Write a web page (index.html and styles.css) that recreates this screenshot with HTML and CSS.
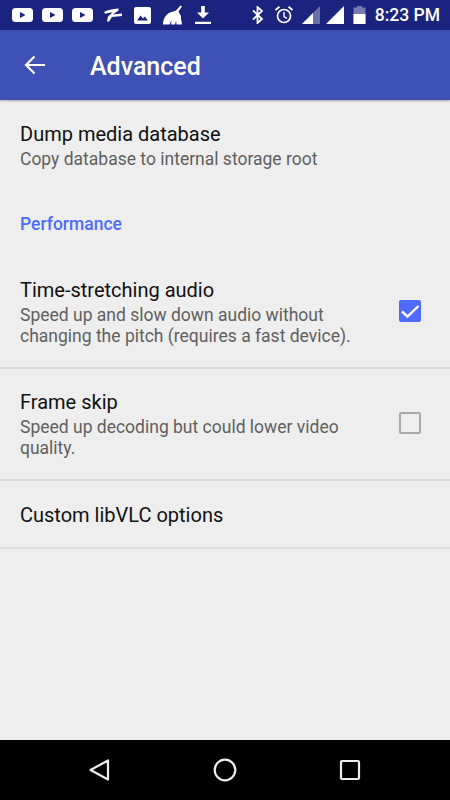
FILE: index.html
```html
<!DOCTYPE html>
<html lang="en">
<head>
<meta charset="utf-8">
<title>Advanced</title>
<link rel="stylesheet" href="styles.css">
</head>
<body>
<div class="phone">
  <header class="status">
    <div class="status-left">
      <svg class="yt" viewBox="0 0 21 14"><rect width="21" height="14" rx="3.5" fill="#fff"/><path d="M8 4l5.5 3L8 10z" fill="#1a237e"/></svg>
      <svg class="yt" viewBox="0 0 21 14"><rect width="21" height="14" rx="3.5" fill="#fff"/><path d="M8 4l5.5 3L8 10z" fill="#1a237e"/></svg>
      <svg class="yt" viewBox="0 0 21 14"><rect width="21" height="14" rx="3.5" fill="#fff"/><path d="M8 4l5.5 3L8 10z" fill="#1a237e"/></svg>
      <svg class="ic-z" viewBox="0 0 20 14"><path d="M1 4C4 2 9 1 15.500 .5V2.500L10 6.500 19 5.500V8L9 9 6 13.500H4L5 8.500 9.500 4.500C6.500 4.500 4 5 2.500 6z" fill="#fff"/></svg>
      <svg class="ic-pic" viewBox="0 0 17 17"><rect width="17" height="17" rx="2" fill="#fff"/><path d="M3 13.500l3.500-5 2.500 3 1.800-2 3.200 4z" fill="#1a237e"/></svg>
      <svg class="ic-broom" viewBox="0 0 20 20"><path d="M0 19.500C0 14 3 9 7 7.500C9 6.500 11.500 6.500 13 5.500L17.500 .5 19 1.500 15.500 6.500C16.500 8 17 10 18 11C17.500 14 19 17 19 19.500H13.500L13 16 12 19.500H8L8.500 15 6.500 19.500z" fill="#fff"/></svg>
      <svg class="ic-dl" viewBox="0 0 16 18"><path d="M6.200 0h3.600v6.500H14L8 12.500 2 6.500h4.200zM0 15.800h16V18H0z" fill="#fff"/></svg>
    </div>
    <div class="status-right">
      <svg class="ic-bt" viewBox="0 0 12 18"><path d="M1 4.500l9 8.500-4.500 4V1l4.500 4-9 8.500" fill="none" stroke="#fff" stroke-width="1.800"/></svg>
      <svg class="ic-alarm" viewBox="0 0 18 18"><circle cx="9" cy="10" r="6.500" fill="none" stroke="#fff" stroke-width="1.700"/><path d="M9 6v4.500l3 1.800" fill="none" stroke="#fff" stroke-width="1.400"/><path d="M.5 4L4.500.8M17.500 4L13.500.8" stroke="#fff" stroke-width="1.900"/></svg>
      <svg class="ic-sig" viewBox="0 0 18 18"><path d="M18 0v18H0z" fill="#fff" fill-opacity=".35"/><path d="M11 7v11H0z" fill="#fff"/></svg>
      <svg class="ic-sig" viewBox="0 0 18 18"><path d="M18 0v18H0z" fill="#fff"/></svg>
      <svg class="ic-bat" viewBox="0 0 12 18"><path d="M3.500 0h5v1.500H12V18H0V1.500h3.500z" fill="#fff" fill-opacity=".4"/><path d="M0 8h12v10H0z" fill="#fff"/></svg>
      <span class="clock">8:23 PM</span>
    </div>
  </header>
  <div class="appbar">
    <svg class="ic-back" viewBox="0 0 22 20"><path d="M21 10H2.500M10.500 1.500L2 10l8.500 8.500" fill="none" stroke="#fff" stroke-width="2.200"/></svg>
    <h1 class="appbar-title">Advanced</h1>
  </div>
  <main class="content">
    <section class="pref pref-first">
      <div class="pref-title">Dump media database</div>
      <div class="pref-sum">Copy database to internal storage root</div>
    </section>
    <div class="category">Performance</div>
    <section class="pref pref-check">
      <div class="pref-text">
        <div class="pref-title">Time-stretching audio</div>
        <div class="pref-sum">Speed up and slow down audio without changing the pitch (requires a fast device).</div>
      </div>
      <span class="box box-on"><svg viewBox="0 0 22 22"><path d="M3 11.500l5.500 5L19.500 6" fill="none" stroke="#fff" stroke-width="2.400"/></svg></span>
    </section>
    <section class="pref pref-check">
      <div class="pref-text">
        <div class="pref-title">Frame skip</div>
        <div class="pref-sum">Speed up decoding but could lower video quality.</div>
      </div>
      <span class="box"></span>
    </section>
    <section class="pref pref-single">
      <div class="pref-title">Custom libVLC options</div>
    </section>
  </main>
  <nav class="navbar">
    <svg class="nav-ic" viewBox="0 0 24 24"><path d="M2.500 12L20 2.500v19z" fill="none" stroke="#eee" stroke-width="2.200" stroke-linejoin="round"/></svg>
    <svg class="nav-ic" viewBox="0 0 24 24"><circle cx="12" cy="12" r="10.300" fill="none" stroke="#eee" stroke-width="2.200"/></svg>
    <svg class="nav-ic" viewBox="0 0 24 24"><rect x="3" y="3" width="18" height="18" rx="1" fill="none" stroke="#eee" stroke-width="2.200"/></svg>
  </nav>
</div>
</body>
</html>
```

FILE: styles.css
```css
* { box-sizing: border-box; }
html, body { margin: 0; padding: 0; }
body { font-family: Roboto, sans-serif; background: #eee; }
.phone { width: 450px; height: 800px; display: flex; flex-direction: column; overflow: hidden; background: #eee; }

.status { height: 30px; flex: none; background: #1a237e; display: flex; justify-content: space-between; align-items: center; padding: 0 10px 0 12px; }
.status-left, .status-right { display: flex; align-items: center; }
.status-left { gap: 9px; }
.yt { width: 21px; height: 14px; display: block; }
.ic-z { width: 20px; height: 14px; margin-left: 1px; }
.ic-pic { width: 17px; height: 17px; margin-left: 2px; }
.ic-broom { width: 20px; height: 20px; margin-left: 3px; }
.ic-dl { width: 16px; height: 18px; margin-left: 3px; }
.status-right { color: #fff; }
.ic-bt { width: 12px; height: 18px; margin-right: 11px; }
.ic-alarm { width: 18px; height: 18px; margin-right: 9px; }
.ic-sig { width: 18px; height: 18px; margin-right: 6px; }
.ic-sig + .ic-sig { margin-right: 9px; }
.ic-bat { width: 13px; height: 18px; margin-right: 9px; }
.clock { font-size: 17.500px; font-weight: 500; }

.appbar { height: 70px; flex: none; background: #3f51b5; display: flex; align-items: center; padding-left: 24px; box-shadow: 0 1px 2px rgba(0,0,0,.3); position: relative; }
.ic-back { width: 22px; height: 20px; margin-right: 44px; }
.appbar-title { margin: 0; font-size: 25px; line-height: 30px; padding-top: 4px; font-weight: 500; color: #fff; }

.content { flex: 1; }
.pref { padding-left: 20px; padding-right: 29px; }
.pref-first { padding-top: 21px; }
.pref-title { font-size: 20px; line-height: 26px; color: #111; }
.pref-sum { font-size: 17.500px; line-height: 21.500px; margin-top: 2px; color: #5f5f5f; }
.category { font-size: 17.500px; font-weight: 500; line-height: 24px; color: #4d6bfe; height: 86.500px; padding: 41.500px 20px 0; }
.pref-check { display: flex; align-items: center; justify-content: space-between; height: 112px; padding-top: 19px; padding-bottom: 19px; border-bottom: 2px solid #dcdcdc; }
.pref-text { width: 345px; }
.pref-single { height: 68px; padding-top: 2px; display: flex; align-items: center; border-bottom: 2px solid #dcdcdc; }
.box { width: 22px; height: 22px; border-radius: 2px; border: 2.500px solid #a9a9a9; flex: none; margin-top: -2px; }
.box-on { background: #4d6bfe; border: none; }
.box svg { display: block; width: 22px; height: 22px; }

.navbar { height: 60px; flex: none; background: #000; display: flex; justify-content: space-between; padding: 18px 88px 0; }
.nav-ic { width: 24px; height: 24px; }
```
